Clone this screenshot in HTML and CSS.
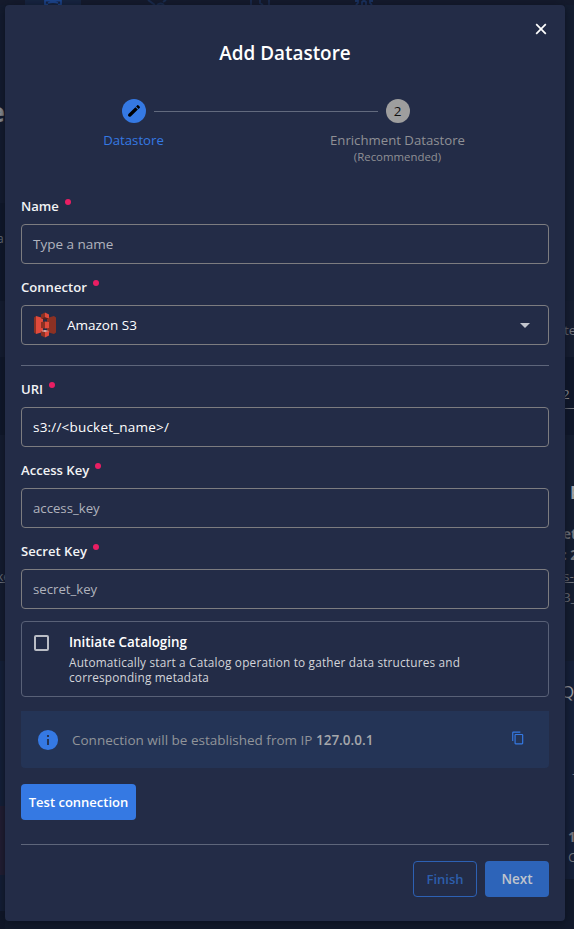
FILE: index.html
```html
<!DOCTYPE html>
<html lang="en">
<head>
<meta charset="utf-8">
<title>Add Datastore</title>
<link rel="stylesheet" href="styles.css">
</head>
<body>
<div class="backdrop" aria-hidden="true">
  <div class="topbar">
    <span class="tab"><svg width="18" height="5" viewBox="0 0 18 5"><path d="M1 0v5M17 0v5M1 4.500h3M14 4.500h3M1 .6h16M4 3q5-1.600 10 0" fill="none" stroke="#1d4791" stroke-width="1.7"/></svg></span>
    <svg class="nav-a" width="20" height="5" viewBox="0 0 20 5"><path d="M1 0l7 5M19 0l-3 2M10 5q4-3 7 0" fill="none" stroke="#1b2d50" stroke-width="2"/></svg>
    <svg class="nav-b" width="20" height="5" viewBox="0 0 20 5"><path d="M1 0v5M10 0v3l3 2M19 0v5" fill="none" stroke="#1b2d50" stroke-width="1.800"/></svg>
    <svg class="nav-c" width="20" height="5" viewBox="0 0 20 5"><path d="M1 1h3v2l-2 2M19 1h-3v2l2 2M8 5V2q2-2 4 0v3" fill="none" stroke="#1b3361" stroke-width="1.800"/></svg>
  </div>
  <div class="sides">
    <div class="edge left">
      <div class="band b1"><b class="heading">e</b></div>
      <div class="band b2"><span class="cell">a</span></div>
      <div class="band b3"></div>
      <div class="band b4"></div>
      <div class="band b5"><span class="cell link">ke</span></div>
      <div class="band b6"></div>
      <div class="band b7"></div>
      <div class="band b8"></div>
      <div class="band b9"></div>
    </div>
    <div class="edge right">
      <div class="band r1"></div>
      <div class="band r2"><span class="te">te</span></div>
      <div class="band r3"><span class="two">2</span></div>
      <div class="band r4"><b class="bar">F</b><b class="et">et</b><b>: 2</b><span class="link">s-</span><span>3_</span></div>
      <div class="band r5"><span class="q">Q</span></div>
      <div class="band r6">-</div>
      <div class="band r7"><b>1</b><span>C</span></div>
      <div class="band r8"></div>
    </div>
  </div>
</div>

<main class="modal">
  <button class="close" aria-label="Close"><svg width="12" height="12" viewBox="0 0 12 12"><path d="M1.2 1.2l9.6 9.6M10.8 1.2L1.2 10.8" stroke="#fff" stroke-width="1.7"/></svg></button>
  <h1>Add Datastore</h1>

  <div class="stepper">
    <div class="step active">
      <span class="dot"><svg width="16" height="16" viewBox="0 0 24 24"><path d="M20.700 7c.4-.4.4-1 0-1.400l-2.300-2.300c-.4-.4-1-.4-1.400 0l-1.900 1.800 3.800 3.800zM14.100 6.200L4 16.300c-1.200 1.200-1.200 2.800-.3 3.700s2.600.9 3.800-.3L17.800 9.900z" fill="#000"/></svg></span>
      <span class="step-label">Datastore</span>
    </div>
    <i class="line"></i>
    <div class="step">
      <span class="dot">2</span>
      <span class="step-label wide">Enrichment Datastore</span>
      <span class="step-sub">(Recommended)</span>
    </div>
  </div>

  <form>
    <label class="field"><span class="label">Name</span><span class="box"><span class="hint">Type a name</span></span></label>
    <label class="field"><span class="label">Connector</span>
      <span class="box select">
        <svg width="24" height="26" viewBox="0 0 24 26"><path d="M1 5.500L3 4v18l-2-1.500zM23 5.500L21 4v18l2-1.500z" fill="#8c3123"/><path d="M3 4l7 2v14l-7 2z" fill="#e04a3c"/><path d="M21 4l-7 2v14l7 2z" fill="#8c3123"/><path d="M12 .5L8 2.500v4L12 5.500z" fill="#8c3123"/><path d="M12 .5l4 2v4l-4-1z" fill="#e04a3c"/><path d="M8 10l4-.5v7L8 16z" fill="#8c3123"/><path d="M12 9.500l4 .5v6l-4 .5z" fill="#e04a3c"/><path d="M8 19l4 1v5.500l-4-2z" fill="#8c3123"/><path d="M12 20l4-1v4.500l-4 2z" fill="#e04a3c"/><path d="M8 19l4-1 4 1-4 1z" fill="#f2b0a9"/><path d="M8 6.500l4-1 4 1-4 1z" fill="#5e1f18"/></svg>
        <span>Amazon S3</span><i class="caret"></i>
      </span>
    </label>
    <hr class="split">
    <label class="field"><span class="label">URI</span><span class="box"><span class="uri">s3://&lt;bucket_name&gt;/</span></span></label>
    <label class="field"><span class="label">Access Key</span><span class="box"><span class="hint key">access_key</span></span></label>
    <label class="field"><span class="label">Secret Key</span><span class="box"><span class="hint key">secret_key</span></span></label>

    <div class="catalog">
      <span class="check"></span>
      <div><strong>Initiate Cataloging</strong><p>Automatically start a Catalog operation to gather data structures and<br>corresponding metadata</p></div>
    </div>

    <div class="notice">
      <svg width="22" height="22" viewBox="0 0 24 24"><path d="M13 9h-2V7h2m0 10h-2v-6h2m-1-9a10 10 0 1 0 0 20 10 10 0 0 0 0-20z" fill="#3579e3" fill-rule="evenodd" transform="translate(-1.200 -1.200) scale(1.100)"/></svg>
      <span class="notice-text">Connection will be established from IP <b>127.0.0.1</b></span>
      <svg class="copy" width="14" height="14" viewBox="0 0 24 24"><path d="M19 21H8V7h11m0-2H8a2 2 0 0 0-2 2v14a2 2 0 0 0 2 2h11a2 2 0 0 0 2-2V7a2 2 0 0 0-2-2m-3-4H4a2 2 0 0 0-2 2v14h2V3h12z" fill="#3579e3"/></svg>
    </div>

    <button type="button" class="btn test">Test connection</button>
    <hr class="foot-line">
    <div class="actions"><button type="button" class="btn finish">Finish</button><button type="button" class="btn next">Next</button></div>
  </form>
</main>
</body>
</html>
```
FILE: styles.css
```css
* { box-sizing: border-box; }
body { margin: 0; width: 574px; height: 929px; overflow: hidden; background: #121a2b; color: #fff; font: 13.5px/20px "Open Sans", "Noto Sans", sans-serif; }
button { font: inherit; border: 0; background: none; padding: 0; }
svg { display: block; flex: none; }

.backdrop { position: absolute; inset: 0; overflow: hidden; color: #777a82; }
.topbar { height: 5px; display: flex; padding-left: 25px; background: #151b2d; }
.tab { width: 56px; display: flex; justify-content: center; background: #172541; }
.nav-a { margin-left: 66px; }
.nav-b { margin-left: 83px; }
.nav-c { margin-left: 84px; }
.sides { display: flex; justify-content: space-between; height: 924px; }
.edge { display: flex; flex-direction: column; overflow: hidden; white-space: nowrap; }
.left { width: 5px; }
.right { width: 9px; }
.band { flex: none; overflow: hidden; }
.b1 { height: 198px; background: #141c2f; padding-top: 97px; }
.b2 { height: 98px; background: #10182a; padding-top: 26px; }
.b3 { height: 56px; background: #151d31; }
.b4 { height: 78px; background: #10182a; }
.b5 { height: 226px; background: #151d31; padding-top: 132px; }
.b6 { height: 145px; background: #15213a; }
.b7 { height: 69px; background: #241e33; }
.b8 { height: 36px; background: #141f36; }
.b9 { height: 18px; background: #101728; }
.heading { display: block; font-size: 27px; line-height: 20px; margin-left: -11px; color: #9a9a9c; }
.cell { display: block; font-size: 12px; margin-left: -3px; }
.link { text-decoration: underline; }
.r1 { height: 296px; background: #151e31; }
.r2 { height: 56px; background: #171f32; padding-top: 19px; }
.te { margin-left: -1px; }
.r3 { height: 78px; background: #10182b; padding-top: 27px; }
.two { display: block; height: 25px; margin-left: -4px; padding-left: 1px; border-bottom: 1px solid #777a82; color: #a3a5aa; }
.r4 { height: 226px; background: #151e31; padding-top: 46px; }
.r4 .bar { font-size: 17px; height: 43px; padding: 2px 0 0 5px; color: #a3a5aa; }
.r4 > :not(.bar) { height: 21px; margin-left: -2px; }
.r5 { height: 72px; background: #16213a; padding-top: 21px; }
.q { font-size: 17px; margin-left: -4px; color: #a3a5aa; }
.r6 { height: 77px; background: #16213a; padding: 30px 0 0 7px; }
.r7 { height: 69px; background: #16213a; padding: 17px 0 0 3px; }
.r8 { height: 50px; background: #121a2c; }
.r4 > *, .r7 > * { display: block; }

.modal { position: relative; width: 560px; height: 916px; margin: 5px 0 0 5px; padding: 36px 16px 0; background: #232c47; border-radius: 4px; box-shadow: 0 2px 10px #0b1120; }
.close { position: absolute; top: 18px; right: 18px; }
h1 { margin: 0; font-size: 18.9px; line-height: 24px; font-weight: 600; text-align: center; }

.stepper { display: flex; justify-content: center; height: 131px; padding: 34px 4px 0 0; }
.step { width: 140px; flex: none; display: flex; flex-direction: column; align-items: center; color: #8f9095; }
.active { width: 70px; color: #3579e3; }
.dot { flex: none; width: 24px; height: 24px; border-radius: 50%; background: #9e9e9e; color: #111; display: flex; align-items: center; justify-content: center; }
.active .dot { background: #3579e3; }
.step-label { margin-top: 7px; font-size: 13.2px; line-height: 20px; white-space: nowrap; }
.step-sub { font-size: 11.4px; line-height: 14px; }
.line { flex: none; width: 224px; height: 1px; background: #626a7e; margin: 12px -50px 0 -15px; }

.field { display: block; height: 81px; }
.label { display: flex; align-items: flex-start; height: 28px; font-size: 13.1px; font-weight: 600; color: #f2f3f5; }
.label::after { content: ""; width: 6px; height: 6px; border-radius: 50%; background: #e91e63; margin: 3px 0 0 6px; }
.box { display: flex; align-items: center; height: 40px; border: 1px solid #7c7c80; border-radius: 4px; padding: 0 11px; }
.hint { color: #b0b3bd; }
.key { font-size: 13.2px; }
.uri { letter-spacing: .2px; }
.select svg { margin-right: 10px; }
.caret { margin: 0 7px 0 auto; border: 5px solid transparent; border-top-color: #c3c6ce; border-bottom: 0; }
hr { border: 0; height: 1px; background: #5e667b; }
.split { margin: 7px 0 13px; }

.catalog { display: flex; height: 76px; margin-top: -1px; border: 1px solid #596177; border-radius: 4px; padding: 10px 12px; }
.check { width: 15px; height: 16px; border: 2px solid #babdc5; border-radius: 2px; margin: 3px 20px 0 0; flex: none; }
.catalog strong { display: block; font-size: 13.4px; font-weight: 600; line-height: 20px; }
.catalog p { margin: 3px 0 0; font-size: 11.8px; letter-spacing: .19px; line-height: 15px; color: #d3d5da; white-space: nowrap; }
.notice { display: flex; align-items: center; height: 57px; margin-top: 14px; padding: 0 24px 0 16px; background: #243456; border-radius: 0 0 4px 4px; color: #91949a; }
.notice-text { margin-left: 13px; white-space: nowrap; }
.notice b { font-weight: 600; color: #a5a7ab; }
.copy { margin: -4px 0 0 auto; }
.btn { height: 36px; border-radius: 4px; color: #fff; font-size: 13px; font-weight: 600; text-align: center; white-space: nowrap; }
.test { display: block; width: 115px; margin-top: 16px; background: #3579e3; }
.foot-line { margin: 24px 0 16px; }
.actions { display: flex; justify-content: flex-end; gap: 8px; }
.finish, .next { width: 64px; }
.finish { border: 1px solid #2d61b4; color: #2d5eac; }
.next { background: #2d64b9; color: #c0c4cd; font-size: 13.5px; }
```
